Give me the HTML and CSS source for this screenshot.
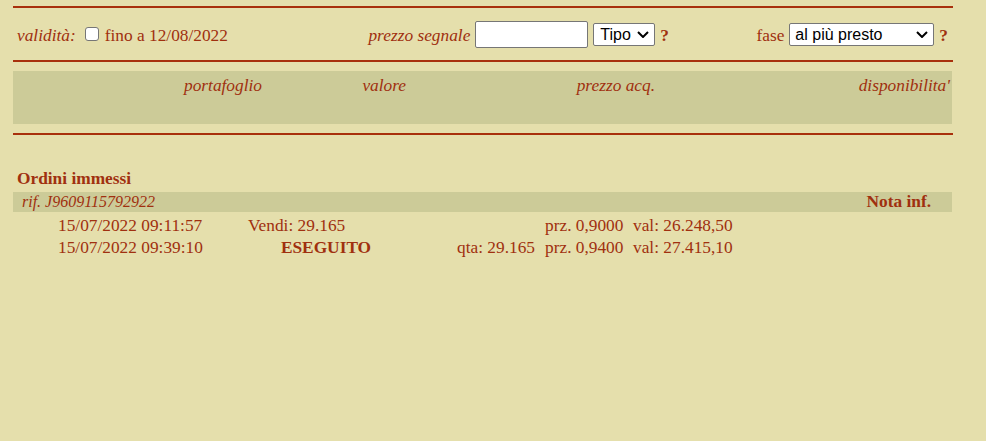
FILE: index.html
```html
<html>
<head>
  <title>Ordine</title>
  <link rel="stylesheet" href="styles.css">
</head>
<body>

<div class="page">
  <div class="rule"></div>

  <div class="controls">
    <div class="ctl ctl-valid">
      <i class="lbl">validità:</i> <input type="checkbox" class="check"> <span class="lbl">fino a 12/08/2022</span>
    </div>
    <div class="ctl ctl-price">
      <i class="lbl">prezzo segnale</i>
      <input type="text" class="price">
      <select class="sel sel-type"><option>Tipo</option></select>
      <b class="lbl help">?</b>
    </div>
    <div class="ctl ctl-phase">
      <span class="lbl">fase</span>
      <select class="sel sel-phase"><option>al più presto</option></select>
      <b class="lbl help">?</b>
    </div>
  </div>

  <div class="rule"></div>

  <!-- intestazione portafoglio -->
  <div class="band">
    <div class="band-cell">portafoglio</div>
    <div class="band-cell">valore</div>
    <div class="band-cell">prezzo acq.</div>
    <div class="band-cell">disponibilita'</div>
  </div>

  <div class="rule"></div>

  <div class="orders-title">Ordini immessi</div>

  <div class="ref-bar">
    <i>rif. J9609115792922</i>
    <b class="note">Nota inf.</b>
  </div>

  <div class="orders">
    <div class="order-row">
      <span></span>
      <span>15/07/2022 09:11:57</span>
      <span>Vendi: 29.165</span>
      <span class="qty"></span>
      <span class="prz">prz. 0,9000</span>
      <span>val: 26.248,50</span>
    </div>
    <div class="order-row">
      <span></span>
      <span>15/07/2022 09:39:10</span>
      <b class="status">ESEGUITO</b>
      <span class="qty">qta: 29.165</span>
      <span class="prz">prz. 0,9400</span>
      <span>val: 27.415,10</span>
    </div>
  </div>
</div>

</body>
</html>
```

FILE: styles.css
```css
:root {
  --bg: #e5dfac;
  --band: #cccb98;
  --ink: #a0300f;
  --line: #a8300b;
}

body {
  margin: 0;
  background: var(--bg);
  color: var(--ink);
  font-family: 'Liberation Serif', 'Times New Roman', serif;
  font-size: 17.33px;
}

.page {
  width: 940px;
  margin: 6px 0 0 13px;
}

.rule {
  height: 2px;
  background: var(--line);
}

.controls {
  display: grid;
  grid-template-columns: 330px 327px 1fr;
  height: 52px;
  align-items: center;
}

.ctl {
  display: flex;
  align-items: center;
  gap: 5px;
  white-space: nowrap;
}

.lbl {
  padding-top: 4px;
}

.ctl-valid {
  padding-left: 4px;
  gap: 0;
}

.check {
  appearance: none;
  width: 14px;
  height: 14px;
  margin: 0 6px 0 9px;
  background: #fff;
  border: 1px solid #767676;
  border-radius: 3px;
}

.ctl-price {
  justify-content: flex-end;
  padding-right: 1px;
}

.ctl-phase {
  justify-content: flex-end;
  padding-right: 5px;
}

.price {
  width: 113px;
  height: 27px;
  box-sizing: border-box;
  font-size: 16px;
  background: #fff;
  border: 1px solid #767676;
  border-radius: 2px;
}

.sel {
  appearance: none;
  height: 23px;
  box-sizing: border-box;
  padding: 0 20px 0 5px;
  font-family: 'Liberation Sans', Arial, sans-serif;
  font-size: 16px;
  color: #000;
  background: #fff url("data:image/svg+xml,%3Csvg xmlns='http://www.w3.org/2000/svg' viewBox='0 0 12 7'%3E%3Cpath d='M1 1 L6 6 L11 1' fill='none' stroke='%23000' stroke-width='2'/%3E%3C/svg%3E") no-repeat right 5px center / 12px 7px;
  border: 1px solid #767676;
  border-radius: 2px;
}

.sel-type {
  width: 62px;
  padding-left: 6px;
}

.sel-phase {
  width: 145px;
}

.help {
  font-weight: bold;
}

.band {
  display: grid;
  grid-template-columns: 251px 144px 249px 1fr;
  height: 53px;
  margin: 9px 1px 9px 0;
  background: var(--band);
  font-style: italic;
}

.band-cell {
  text-align: right;
  padding: 5px 2px 0 0;
}

.orders-title {
  margin-top: 34px;
  padding-left: 4px;
  line-height: 20px;
  font-weight: bold;
}

.ref-bar {
  display: flex;
  justify-content: space-between;
  align-items: center;
  height: 20px;
  margin: 3px 1px 0 0;
  padding: 0 21px 0 9px;
  background: var(--band);
}

.ref-bar i {
  font-size: 16px;
}

.orders {
  padding-top: 3px;
}

.order-row {
  display: grid;
  grid-template-columns: 45px 190px 156px 131px 98px 1fr;
  line-height: 22px;
}

.status {
  text-align: center;
}

.qty {
  text-align: right;
}

.prz {
  padding-left: 10px;
}
```
